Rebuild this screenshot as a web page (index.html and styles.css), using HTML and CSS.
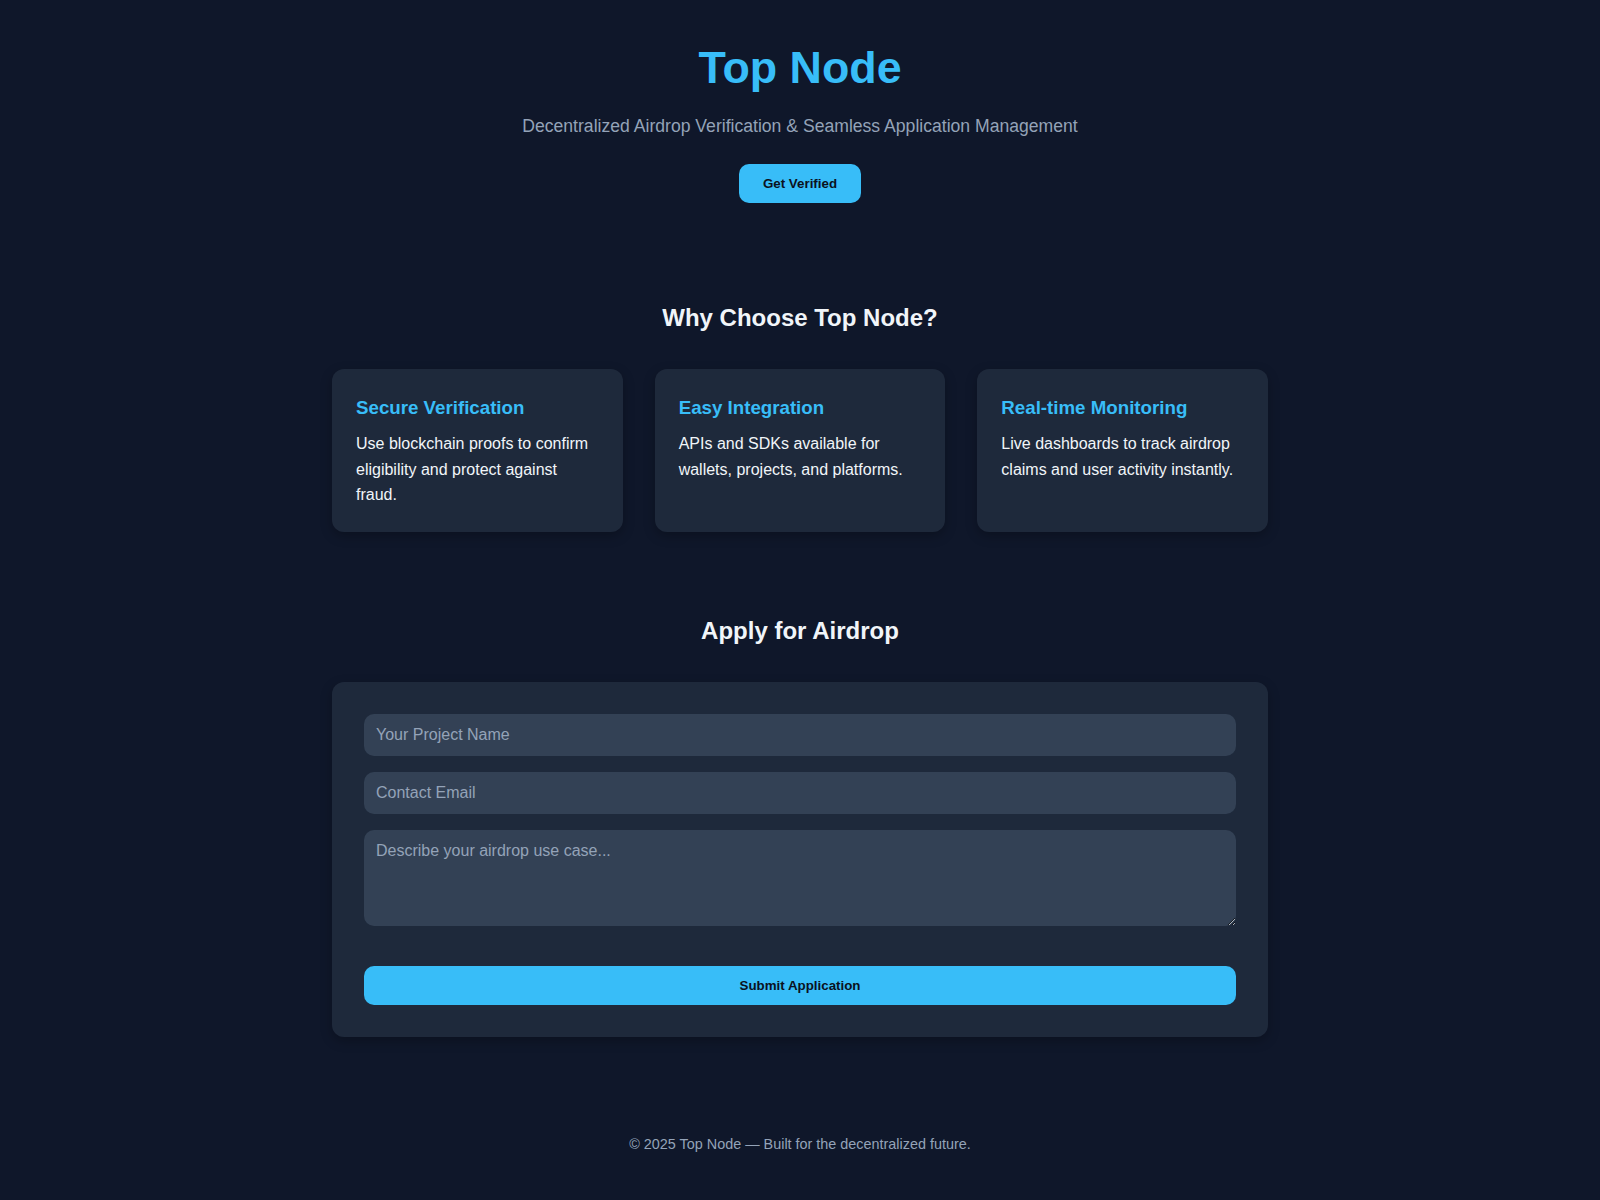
FILE: index.html
```html
<!DOCTYPE html>
<html lang="en">
<head>
  <meta charset="UTF-8">
  <title>Top Node</title>
  <link rel="stylesheet" href="styles.css">
</head>
<body>
  <header class="hero">
    <h1 class="hero-title">Top Node</h1>
    <p class="hero-subtitle">Decentralized Airdrop Verification &amp; Seamless Application Management</p>
    <button class="btn" type="button">Get Verified</button>
  </header>

  <main class="container">
    <section class="section">
      <h2 class="section-title">Why Choose Top Node?</h2>
      <div class="features">
        <div class="feature-card">
          <h3 class="feature-title">Secure Verification</h3>
          <p class="feature-text">Use blockchain proofs to confirm eligibility and protect against fraud.</p>
        </div>
        <div class="feature-card">
          <h3 class="feature-title">Easy Integration</h3>
          <p class="feature-text">APIs and SDKs available for wallets, projects, and platforms.</p>
        </div>
        <div class="feature-card">
          <h3 class="feature-title">Real-time Monitoring</h3>
          <p class="feature-text">Live dashboards to track airdrop claims and user activity instantly.</p>
        </div>
      </div>
    </section>

    <section class="section">
      <h2 class="section-title">Apply for Airdrop</h2>
      <form class="apply-form">
        <input class="field" type="text" placeholder="Your Project Name">
        <input class="field" type="email" placeholder="Contact Email">
        <textarea class="field field-area" placeholder="Describe your airdrop use case..."></textarea>
        <button class="btn btn-block" type="button">Submit Application</button>
      </form>
    </section>
  </main>

  <footer class="footer">
    <p>&copy; 2025 Top Node — Built for the decentralized future.</p>
  </footer>
</body>
</html>
```

FILE: styles.css
```css
* {
  box-sizing: border-box;
}

body {
  margin: 0;
  background: #0f172a;
  color: #e2e8f0;
  font-family: "Liberation Sans", Arial, Helvetica, sans-serif;
  line-height: 1.6;
}

/* Hero */
.hero {
  text-align: center;
  padding: 2rem 2rem 3.5rem;
}

.hero-title {
  margin: 0 0 0.5rem;
  font-size: 2.8rem;
  color: #38bdf8;
}

.hero-subtitle {
  margin: 0 0 1.5rem;
  font-size: 1.1rem;
  color: #94a3b8;
}

.btn {
  display: inline-block;
  padding: 12px 24px;
  border: none;
  border-radius: 10px;
  background: #38bdf8;
  color: #0b1120;
  font-family: "Liberation Sans", Arial, Helvetica, sans-serif;
  font-weight: bold;
  cursor: pointer;
}

.btn-block {
  width: 100%;
  margin-top: 1.5rem;
}

/* Sections */
.container {
  max-width: 1000px;
  margin: 0 auto;
  padding: 0 2rem;
}

.section {
  padding: 2.5rem 0;
}

.section-title {
  margin: 0 0 2rem;
  text-align: center;
  font-size: 1.5rem;
  color: #f1f5f9;
}

.features {
  display: grid;
  grid-template-columns: repeat(3, 1fr);
  gap: 2rem;
}

.feature-card {
  background: #1e293b;
  border-radius: 12px;
  padding: 1.5rem;
  box-shadow: 0 4px 12px rgba(0, 0, 0, 0.25);
}

.feature-title {
  margin: 0 0 0.5rem;
  font-size: 1.17rem;
  color: #38bdf8;
}

.feature-text {
  margin: 0;
  color: #f1f5f9;
}

/* Form */
.apply-form {
  display: flex;
  flex-direction: column;
  gap: 1rem;
  background: #1e293b;
  border-radius: 12px;
  padding: 2rem;
  box-shadow: 0 4px 12px rgba(0, 0, 0, 0.25);
}

.field {
  width: 100%;
  padding: 12px;
  border: none;
  border-radius: 10px;
  background: #334155;
  color: #f1f5f9;
  font-family: "Liberation Sans", Arial, Helvetica, sans-serif;
  font-size: 1rem;
}

.field::placeholder {
  color: #94a3b8;
}

.field-area {
  height: 6rem;
  resize: vertical;
}

/* Footer */
.footer {
  text-align: center;
  padding: 3.5rem 2rem 2rem;
  color: #94a3b8;
  font-size: 0.9rem;
}

.footer p {
  margin: 0;
}
```
